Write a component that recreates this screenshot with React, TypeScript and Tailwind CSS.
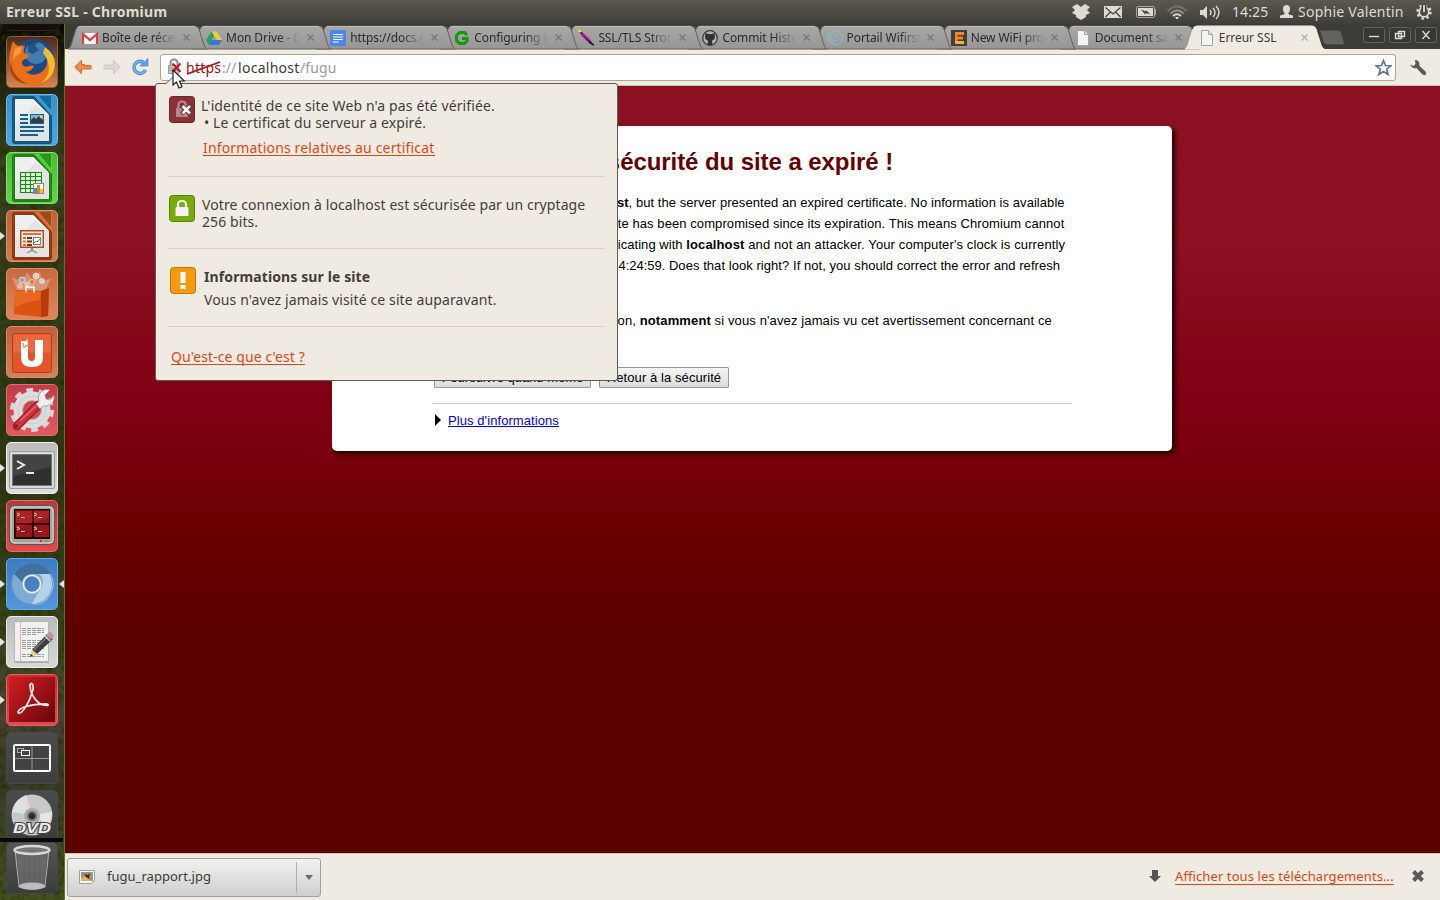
import React from "react";

const ubuntu = "font-['Noto_Sans','Open_Sans',sans-serif]";

/* ---------- Launcher icons ---------- */

function Doc({ dark, mid, children }: { dark: string; mid: string; children: React.ReactNode }) {
  return (
    <svg width="52" height="52" viewBox="0 0 52 52">
      <rect x="6" y="2" width="40" height="48" rx="3" fill={dark} />
      <path d="M28 2h18v20z" fill={mid} />
      <path d="M33 2h12v13q0 1-1 0z" fill={dark} opacity=".75" />
      <path d="M9 5h18l16 16v26H9z" fill="#e3e3e3" />
      <path d="M9 5h18l4 4L9 30z" fill="#f3f3f3" opacity=".7" />
      <path d="M27 5l16 16-2-1-15-13z" fill="#fff" />
      {children}
    </svg>
  );
}

function Firefox() {
  return (
    <svg width="52" height="52" viewBox="0 0 52 52">
      <circle cx="28" cy="23" r="20" fill="#1d4a80" />
      <circle cx="30" cy="17" r="11" fill="#4f8fc0" opacity=".75" />
      <path d="M22 7q5-3 10-1l-3 4 4 4-6 4-5-2z" fill="#113663" opacity=".6" />
      <path d="M7 5q2 4 5 5 4-1 7 0-2 4-1 7l5 2q0 3-4 4-4 2-3 5 2 4 7 2 3-1 5 0-2 5-8 6 6 5 14 1 9-5 7-16-1-6-4-8 9 4 11 13 2 12-6 19-9 8-20 5Q6 46 4 31 2 19 7 5z" fill="#e8701c" />
      <path d="M39 11q10 7 10 17-1 14-14 19 8-6 8-15-1-10-6-15z" fill="#f5bd2e" />
      <path d="M5 25q1 17 17 23-15-1-18-15z" fill="#b63d12" />
      <path d="M9 13q2-2 7-2-2 3-1 6-5 2-8 7 0-6 2-11z" fill="#f59a3e" />
    </svg>
  );
}

function Writer() {
  return (
    <Doc dark="#0f5787" mid="#3b9ad3">
      <g fill="#11628f">
        <path d="M14 20h8v2h-8zM14 24h8v2h-8zM14 28h8v2h-8zM14 32h24v2H14zM14 36h24v2H14zM14 40h18v2H14z" />
        <path d="M24 20h14v10H24z" />
      </g>
      <path d="M25 21h12v8H25z" fill="#77b9e2" />
      <path d="M25 29v-3l3-3 2 2 3-3 4 4v3z" fill="#353b3d" />
      <circle cx="35" cy="23" r="1.300" fill="#f4d354" />
    </Doc>
  );
}

function Calc() {
  return (
    <Doc dark="#218016" mid="#54cf3c">
      <path d="M14 20h22v21H14z" fill="#18890f" />
      <g fill="#dff0db">
        {[21, 25, 29, 33, 37].map((y) => (
          <path key={y} d={`M15 ${y}h4v3h-4zM20 ${y}h4v3h-4zM25 ${y}h4v3h-4zM30 ${y}h5v3h-5z`} />
        ))}
      </g>
      <path d="M27 31h11v11H27z" fill="#888" />
      <path d="M28 32h9v9h-9z" fill="#f5f5f5" />
      <path d="M28 36h3v5h-3z" fill="#3f95cf" />
      <path d="M31 33h3v8h-3z" fill="#ec8325" />
      <path d="M34 37h3v4h-3z" fill="#efc52e" />
    </Doc>
  );
}

function Impress() {
  return (
    <Doc dark="#8f3911" mid="#d3713d">
      <path d="M14 20h24v18H14z" fill="#b9491a" />
      <path d="M15.500 21.500h21v15h-21z" fill="#f5eeea" />
      <path d="M17 23h18v2H17zM17 27h3v2h-3zM17 30.500h3v2h-3zM17 34h3v2h-3z" fill="#d4763f" />
      <path d="M21 27h5v2h-5zM21 30.500h5v2h-5zM21 34h5v2h-5z" fill="#8c2f08" />
      <path d="M27 27h8v8h-8z" fill="#777" />
      <path d="M28 28h6v6h-6z" fill="#fff" />
      <path d="M28 33l2-2 1 1 3-3" stroke="#29a329" fill="none" />
      <path d="M25 38h2v2l5 3h-2l-4-2-4 2h-2l5-3z" fill="#888" />
    </Doc>
  );
}

function Bag() {
  return (
    <svg width="52" height="52" viewBox="0 0 52 52">
      <path d="M11 22L6 9l10 5 5-10 6 9 7-10 2 11 9-4-6 13z" fill="#fff" opacity=".25" />
      <g stroke="#f3e3da" strokeWidth=".8">
        <circle cx="16" cy="12" r="3" fill="#8badbd" />
        <circle cx="30" cy="8" r="3" fill="#e5cfc0" />
        <circle cx="26" cy="14" r="2.500" fill="#e7743c" />
        <circle cx="36" cy="13" r="2.500" fill="#c9d3d3" />
        <circle cx="14" cy="18" r="2" fill="#e9a884" />
        <circle cx="21" cy="16" r="2" fill="#e8b7a0" />
      </g>
      <path d="M9 22l26 1 8-3-1 28-7 1-27-3z" fill="#dc5311" />
      <path d="M35 23l8-3-1 28-7 1z" fill="#b83c0a" />
      <path d="M20 25v-6h8v6" stroke="#fff" strokeWidth="1.500" fill="none" />
      <path d="M9 23l26 1-1 8q-13 1-25 8z" fill="#f0762f" opacity=".6" />
    </svg>
  );
}

function UbuntuOne() {
  return (
    <svg width="52" height="52" viewBox="0 0 52 52">
      <rect x="6.500" y="7.500" width="39" height="39" rx="2" fill="#e4562a" stroke="#ad421e" />
      <rect x="7.500" y="8.500" width="37" height="18" fill="#f08158" opacity=".45" />
      <path d="M15 15q5 1 7-2v18q0 4 3.500 4t3.500-4V14h8v18q0 9-11 9t-11-9z" fill="#fff" />
      <path d="M22 15v6l-2-2-2 3-1-5" fill="none" stroke="#e08a6c" />
    </svg>
  );
}

function Settings() {
  return (
    <svg width="52" height="52" viewBox="0 0 52 52">
      <circle cx="26" cy="26" r="19" fill="none" stroke="#d6d6d6" strokeWidth="6" strokeDasharray="6.500 5.440" />
      <circle cx="26" cy="26" r="14" fill="none" stroke="#dcdcdc" strokeWidth="9" />
      <circle cx="26" cy="26" r="9.500" fill="none" stroke="#b5b5b5" />
      <circle cx="26" cy="26" r="14" fill="none" stroke="#cacaca" />
      <path d="M32 21L11 42" stroke="#8d1720" strokeWidth="8.500" strokeLinecap="round" />
      <path d="M32 21L11 42" stroke="#c9353b" strokeWidth="6.500" strokeLinecap="round" />
      <path d="M30 20l3-3q-2-6 3-10 4-3 8-1l-5 5 1 4 4 1 4-5q1 6-3 9-4 3-8 2l-3 3z" fill="#eee" stroke="#888" strokeWidth=".7" />
      <circle cx="10" cy="42" r="1.700" fill="#70131a" />
      <path d="M14 37l16-15" stroke="#e8686c" strokeWidth="1.500" />
    </svg>
  );
}

function Terminal() {
  return (
    <svg width="52" height="52" viewBox="0 0 52 52">
      <rect x="3" y="9" width="46" height="38" rx="2" fill="#999" />
      <rect x="4" y="10" width="44" height="36" rx="1.500" fill="#d9d9d9" />
      <rect x="6.500" y="12.500" width="39" height="31" fill="#30302f" stroke="#777" />
      <path d="M7 13h38v12L7 34z" fill="#565656" opacity=".5" />
      <path d="M11 19l7 4-7 4M20 31h8" stroke="#ececec" strokeWidth="2" fill="none" />
    </svg>
  );
}

function Terminator() {
  return (
    <svg width="52" height="52" viewBox="0 0 52 52">
      <rect x="3.500" y="5.500" width="45" height="39" rx="5" fill="#a5a5a0" stroke="#555" />
      <rect x="5" y="7" width="42" height="36" rx="4" fill="none" stroke="#d7d7d2" />
      <rect x="8" y="9" width="36" height="30" fill="#230605" />
      <path d="M10 11h16v12H10zM28 11h15v12H28zM10 25h16v12H10zM28 25h15v12H28z" fill="#98161a" />
      <path d="M9 10h34v7l-34 12z" fill="#e44" opacity=".25" />
      <path d="M11 13l3 1.500-3 1.500M15 17.500h4M28 13l3 1.500-3 1.500M32 17.500h4M11 27l3 1.500-3 1.500M15 31.500h4M28 27l3 1.500-3 1.500M32 31.500h4" stroke="#fbd9d9" fill="none" />
      <circle cx="35" cy="41" r="1.300" fill="#f22" />
      <path d="M38 41h5" stroke="#777" />
    </svg>
  );
}

function Chromium() {
  return (
    <svg width="52" height="52" viewBox="0 0 52 52">
      <circle cx="26" cy="26" r="21" fill="#7eaad8" />
      <path d="M8 16A21 21 0 0 1 45 16H26a10 10 0 0 0-10 8z" fill="#41709f" />
      <path d="M45 16A21 21 0 0 1 25 47l10-17a10 10 0 0 0-2-14z" fill="#b5d2ea" />
      <path d="M8 16A21 21 0 0 0 25 47l6-12a10 10 0 0 1-14-6z" fill="#7fabd7" />
      <circle cx="26" cy="26" r="9.500" fill="#e6f0f8" />
      <circle cx="26" cy="26" r="7.700" fill="#4a80c0" />
      <circle cx="26" cy="26" r="20.500" fill="none" stroke="#4a7db5" opacity=".7" />
    </svg>
  );
}

function Gedit() {
  return (
    <svg width="52" height="52" viewBox="0 0 52 52">
      <rect x="9" y="6" width="34" height="41" fill="#aaa" />
      <rect x="8.500" y="5.500" width="34" height="40" fill="#f0f0f0" stroke="#b5b5b5" />
      <path d="M14.500 6v39" stroke="#f1adad" />
      <g stroke="#9d9d9d" strokeWidth="1">
        {[12, 14, 16, 18, 24, 26, 28, 30, 32, 38, 40].map((y, i) => (
          <path key={y} d={i % 4 === 3 ? `M16 ${y}.5h14` : `M16 ${y}.5h22`} strokeDasharray="4 1" />
        ))}
      </g>
      <path d="M26 34l15-16 6 5-16 15z" fill="#3e3e3e" />
      <path d="M28 34l14-14" stroke="#777" strokeWidth="1.500" />
      <path d="M24 41l2-7 5 4z" fill="#e8d27b" />
      <path d="M24 41l1-3 2 2z" fill="#222" />
      <path d="M40 19l3-3q2 0 4 2 1 2 0 3l-2 3z" fill="#cf8bae" />
      <path d="M39 20l5 5" stroke="#ddd" strokeWidth="1.500" />
    </svg>
  );
}

function Adobe() {
  return (
    <svg width="52" height="52" viewBox="0 0 52 52">
      <defs>
        <linearGradient id="adobe" x1="0" y1="0" x2="1" y2="1">
          <stop offset="0" stopColor="#d31e22" />
          <stop offset="1" stopColor="#680609" />
        </linearGradient>
      </defs>
      <rect x="3" y="3" width="46" height="45" fill="url(#adobe)" />
      <path d="M12 38c1-4 11-8 28-8 6 1-1 3-7-1-6-5-9-12-9-18 1-4 5 0 2 8-3 10-10 21-13 20-1 0-1 0-1-1z" fill="none" stroke="#f5e4e4" strokeWidth="1.800" />
    </svg>
  );
}

function Workspaces() {
  return (
    <svg width="52" height="52" viewBox="0 0 52 52">
      <rect x="8" y="13" width="36" height="26" rx="1" fill="#424242" stroke="#fff" strokeWidth="2" />
      <path d="M26 14v24M9 26.500h34" stroke="#999" />
      <rect x="11.500" y="16.500" width="6" height="4" fill="none" stroke="#aaa" />
      <rect x="15.500" y="18.500" width="8" height="5" fill="#444" stroke="#fff" />
    </svg>
  );
}

function Dvd() {
  return (
    <svg width="52" height="52" viewBox="0 0 52 52">
      <circle cx="26" cy="25" r="20.500" fill="#c8c8c8" />
      <path d="M26 25L8 16q3-7 12-11z" fill="#e0e0e0" />
      <path d="M26 25L6 22l2-6z" fill="#d6e6e1" />
      <path d="M26 25L14 9l5-3z" fill="#e5d5df" />
      <path d="M26 25l20-3-3 14z" fill="#e6e6e6" />
      <circle cx="26" cy="26" r="8" fill="#aaa" />
      <circle cx="26" cy="26" r="5" fill="#707070" />
      <circle cx="26" cy="26" r="3" fill="#282828" />
      <text x="26" y="43" textAnchor="middle" textLength="38" lengthAdjust="spacingAndGlyphs" fontFamily="Liberation Sans" fontStyle="italic" fontWeight="bold" fontSize="14" fill="#eee" stroke="#444" strokeWidth="2" paintOrder="stroke">DVD</text>
    </svg>
  );
}

function Trash() {
  return (
    <svg width="52" height="52" viewBox="0 0 52 52">
      <path d="M9 8l4 37q13 5 26 0l4-37z" fill="#777" opacity=".6" />
      <path d="M9 8l4 37q13 5 26 0l4-37" fill="none" stroke="#aaa" />
      <g stroke="#9a9a9a" opacity=".15">
        <path d="M15 12l2 33M20 12l1 34M26 12v35M32 12l-1 34M37 12l-2 33M11 20h30M12 28h28M12 36h28" />
      </g>
      <ellipse cx="26" cy="44" rx="13" ry="3.500" fill="#bbb" />
      <ellipse cx="26" cy="8" rx="17.500" ry="4" fill="#777" stroke="#d8d8d8" strokeWidth="2.500" />
    </svg>
  );
}

const launcher = [
  { c: "from-[#4a2d1e] to-[#d68751] border-[#985a35]", I: Firefox },
  { c: "from-[#3c90c8] to-[#4ea5de] border-[#6fb9e6]", I: Writer },
  { c: "from-[#4cba36] to-[#5ed649] border-[#83e36f]", I: Calc },
  { c: "from-[#bb6238] to-[#d27b4f] border-[#dc9470]", I: Impress, run: true },
  { c: "from-[#c9683f] to-[#de875b] border-[#dd8c69]", I: Bag },
  { c: "from-[#c55e3b] to-[#d88057] border-[#dc8b68]", I: UbuntuOne },
  { c: "from-[#c43a46] to-[#df5a61] border-[#e16d74]", I: Settings },
  { c: "from-[#bcbcbc] to-[#dedede] border-[#f0f0f0]", I: Terminal, run: true },
  { c: "from-[#b8383d] to-[#df4b4f] border-[#e76a6c]", I: Terminator },
  { c: "from-[#3c7cc2] to-[#5497dc] border-[#6ca7e4]", I: Chromium, run: true, active: true },
  { c: "from-[#bcbcbc] to-[#d8d8d8] border-[#ececec]", I: Gedit, run: true },
  { c: "from-[#c72d34] to-[#e14a4f] border-[#e56266]", I: Adobe, run: true },
  { c: "from-[#4a4c4c] to-[#3d3d3f] border-[#4a4a4b]", I: Workspaces },
  { c: "from-[#4a4c4c] to-[#3a3b3b] border-[#4a4a4b]", I: Dvd },
];

function Tile({ c, children }: { c: string; children: React.ReactNode }) {
  return (
    <div className={`h-[52px] w-[52px] shrink-0 overflow-hidden rounded-[5px] border bg-linear-to-b ${c}`}>
      <div className="-m-px">{children}</div>
    </div>
  );
}

function Texture() {
  return (
    <svg className="absolute inset-0" width="65" height="876">
      <defs>
        <linearGradient id="grass" x1="0" y1="0" x2="0" y2="1">
          <stop offset="0" stopColor="#070806" />
          <stop offset=".05" stopColor="#191d10" />
          <stop offset=".15" stopColor="#3b4023" />
          <stop offset=".5" stopColor="#2c3716" />
          <stop offset=".7" stopColor="#38421d" />
          <stop offset=".78" stopColor="#4b4536" />
          <stop offset=".85" stopColor="#3a382d" />
          <stop offset="1" stopColor="#42511f" />
        </linearGradient>
        <filter id="noise" x="0" y="0" width="1" height="1">
          <feTurbulence type="fractalNoise" baseFrequency=".13" numOctaves="4" seed="4" />
          <feColorMatrix values="0 0 0 0 .02  0 0 0 0 .03  0 0 0 0 0  1.8 1.2 0 0 -1.3" />
        </filter>
      </defs>
      <rect width="65" height="876" fill="url(#grass)" />
      <rect width="65" height="876" filter="url(#noise)" />
      <path d="M64.500 0v876" stroke="#62722f" />
    </svg>
  );
}

function Launcher() {
  return (
    <aside className="relative flex w-[65px] shrink-0 flex-col overflow-hidden">
      <Texture />
      <div className="relative mx-[6px] h-[7px] w-[52px] rounded-b-[5px] border-b border-[#3a2012] bg-[#150d09]" />
      <div className="relative mt-[5px] flex flex-col gap-[6px]">
        {launcher.map(({ c, I, run, active }, i) => (
          <div key={i} className="flex items-center">
            <div className="w-[6px] shrink-0">
              {run && <svg width="5" height="8" viewBox="0 0 5 8"><path d="M0 0l5 4-5 4z" fill="#e4e4e4" /></svg>}
            </div>
            <Tile c={c}><I /></Tile>
            {active && <svg width="6" height="8" viewBox="0 0 6 8"><path d="M6 0L1 4l5 4z" fill="#e4e4e4" /></svg>}
          </div>
        ))}
      </div>
      <div className="relative ml-[6px]">
        <div className="absolute -left-[6px] -top-[4px] h-[4px] w-[63px] bg-[#090a08]" />
        <Tile c="from-[#555656] to-[#3a3b3c] border-[#454647]"><Trash /></Tile>
      </div>
    </aside>
  );
}

/* ---------- Top panel ---------- */

function TopPanel() {
  return (
    <header className="flex h-6 shrink-0 items-center bg-linear-to-b from-[#5c594e] to-[#3f3e3a] pl-[6px] text-[#dfdbd2]">
      <h1 className="text-[14px] font-bold leading-6 tracking-[0.26px]">Erreur SSL - Chromium</h1>
      <div className="ml-auto flex items-center pr-[8px] text-[14px] leading-6">
        <svg width="18" height="16" viewBox="0 0 18 16" fill="#dfdbd2">
          <path d="M5 0l4 3 4-3 5 3-3 3 3 3-4 2v2l-5 3-5-3v-2L0 9l3-3-3-3z" />
        </svg>
        <svg className="ml-[14px]" width="18" height="12" viewBox="0 0 18 12">
          <path d="M0 0h18v12H0z" fill="#dfdbd2" />
          <path d="M1.500 1.500L9 8l7.500-6.500M1.500 11L6.500 6M16.500 11l-5-5" stroke="#454440" strokeWidth="1.300" fill="none" />
        </svg>
        <svg className="ml-[14px]" width="20" height="12" viewBox="0 0 20 12">
          <rect x=".5" y=".5" width="18" height="11" rx="1.500" fill="none" stroke="#aaa69d" />
          <path d="M19 3h1v6h-1z" fill="#aaa69d" />
          <path d="M2 2h15v8H2z" fill="#dfdbd2" />
          <path d="M5 3.500l5 2V4l4.500 4.500-5-1.500V9z" fill="#454440" />
        </svg>
        <svg className="ml-[11px]" width="20" height="15" viewBox="0 0 20 15" fill="none" strokeWidth="1.800">
          <path d="M.5 6q9.500-9 19 0" stroke="#77746d" />
          <path d="M3.500 8.500q6.500-6 13 0" stroke="#928f87" />
          <path d="M6 11q4-3.500 8 0" stroke="#dfdbd2" />
          <path d="M8.500 12.500h3L10 14z" fill="#dfdbd2" stroke="#dfdbd2" strokeWidth="1" />
        </svg>
        <svg className="ml-[13px]" width="20" height="15" viewBox="0 0 20 15">
          <path d="M0 5h3l4-4v13l-4-4H0z" fill="#dfdbd2" />
          <path d="M10 5q2 2.500 0 5M13 3q4 4.500 0 9M16 1q6 6.500 0 13" fill="none" stroke="#dfdbd2" strokeWidth="1.400" />
        </svg>
        <span className="ml-[12px] w-[36px] whitespace-nowrap tracking-[0.1px]">14:25</span>
        <svg className="ml-[12px]" width="13" height="14" viewBox="0 0 13 14">
          <path d="M6.500 0Q10 0 10 4q0 3-2 4.500 1 1.500 5 2V13H0v-2.500q4-.5 5-2Q3 7 3 4q0-4 3.500-4z" fill="#dfdbd2" />
        </svg>
        <span className="ml-[5px] w-[106px] whitespace-nowrap tracking-[0.25px]">Sophie Valentin</span>
        <svg className="ml-[12px]" width="16" height="16" viewBox="0 0 16 16">
          <circle cx="8" cy="8" r="6.500" fill="none" stroke="#dfdbd2" strokeWidth="2.500" strokeDasharray="2.300 2.800" />
          <circle cx="8" cy="8" r="4.800" fill="none" stroke="#dfdbd2" strokeWidth="1.800" />
          <path d="M8 0v8" stroke="#444340" strokeWidth="5" />
          <path d="M8 1v7" stroke="#dfdbd2" strokeWidth="1.800" />
        </svg>
      </div>
    </header>
  );
}

/* ---------- Tabs ---------- */

const PageIcon = () => (
  <svg width="16" height="16" viewBox="0 0 16 16">
    <path d="M2.500.5h7l4 4v11h-11z" fill="#f4f4f4" stroke="#a4a4a4" />
    <path d="M9.500.5v4h4" fill="#ddd" stroke="#a4a4a4" />
  </svg>
);

const tabs = [
  { t: "Boîte de réception", icon: (
    <svg width="16" height="16" viewBox="0 0 16 16"><path d="M0 3h16v11H0z" fill="#f6f6f6" /><path d="M1 14V4l7 6 7-6v10" fill="none" stroke="#db3d38" strokeWidth="2.200" /></svg>) },
  { t: "Mon Drive - Comptes", icon: (
    <svg width="16" height="16" viewBox="0 0 16 16"><path d="M5.500 1.500h5L16 10h-5z" fill="#fbc92f" /><path d="M5.500 1.500L8 6l-5 9-3-5z" fill="#20a464" /><path d="M5.500 10H16l-3 5H3z" fill="#3777e3" /></svg>) },
  { t: "https://docs.google", icon: (
    <svg width="16" height="16" viewBox="0 0 16 16"><rect width="16" height="16" rx="1" fill="#4a86ee" /><path d="M3 4.500h10M3 7h10M3 9.500h10M3 12h6" stroke="#fff" strokeWidth="1.200" /></svg>) },
  { t: "Configuring HTTPS", icon: (
    <svg width="16" height="16" viewBox="0 0 16 16"><path d="M13 5L10.500 2.500h-5L2.500 5.500v5l3 3h5l2.500-2.500V8.500H8" fill="none" stroke="#0a9a0a" strokeWidth="3" /></svg>) },
  { t: "SSL/TLS Strong", icon: (
    <svg width="16" height="16" viewBox="0 0 16 16"><path d="M1 1l3 1 7 6 4 6-5-2-6-6z" fill="#e5122d" /><path d="M3 3l9 9" stroke="#3811a5" strokeWidth="2" /><path d="M4 4l8 6" stroke="#e431d1" /><path d="M0 0h3v2H1z" fill="#f9e52a" /><path d="M11 12l5 3" stroke="#111" strokeWidth="1.500" /></svg>) },
  { t: "Commit History", icon: (
    <svg width="16" height="16" viewBox="0 0 16 16"><circle cx="8" cy="8" r="7.300" fill="#b3b1ad" stroke="#3b3b3b" strokeWidth="1.300" /><path d="M3.500 3l2.500 1h4l2.500-1 .5 3q0 4-3 4.500l.5 4.500h-5l.500-4.500Q3 10 3 6z" fill="#333" /></svg>) },
  { t: "Portail Wifirst", icon: (
    <svg width="16" height="16" viewBox="0 0 16 16" fill="none" stroke="#8bb8cf" strokeWidth="1.200"><path d="M2 3Q-1 9 4 13q6 4 10-1 4-7-2-10-5-3-8 2-2 5 2 7 4 1 5-3 0-3-3-3-2 1-1 3" /></svg>) },
  { t: "New WiFi project", icon: (
    <svg width="16" height="16" viewBox="0 0 16 16"><path d="M0 0h16v16H0z" fill="#3f3f40" /><path d="M4 2h9v3H6.500v1.500H12v3H6.500V11H13v3H4z" fill="#f6871d" /><path d="M4 11h9v3H4z" fill="#fbb32a" /></svg>) },
  { t: "Document sans titre", icon: <PageIcon /> },
];

const tabPath = "M0 24Q2 23 3 20L8 4Q9 1 12 1H127Q130 1 131 4L136 20Q137 23 139 24z";

function TabBody({ t, icon, active }: { t: string; icon: React.ReactNode; active?: boolean }) {
  return (
    <>
      <svg className="absolute left-0 top-0" width="140" height="25" viewBox="0 0 140 25">
        <defs>
          <linearGradient id="tabg" x1="0" y1="0" x2="0" y2="1">
            <stop offset="0" stopColor="#a9a8a6" />
            <stop offset="1" stopColor="#989693" />
          </linearGradient>
        </defs>
        <path d={tabPath} fill={active ? "#f0ebe2" : "url(#tabg)"} stroke={active ? "#f0ebe2" : "#62605c"} strokeWidth="1" />
        {!active && <path d="M10 2.500Q11 1.500 12 1.500H127" stroke="#bab9b7" fill="none" />}
      </svg>
      <div className="relative flex h-[25px] items-center pl-[14px]">
        <div className="w-4 shrink-0">{icon}</div>
        <span
          className={`ml-[4px] w-[74px] overflow-hidden whitespace-nowrap text-[12px] leading-[24px] ${
            active ? "tracking-[-0.05px] text-[#3b3a36]" : "tracking-[-0.1px] text-[#2b2a27] mask-r-from-70% mask-r-to-100%"
          }`}
        >
          {t}
        </span>
        <svg className={active ? "ml-[8px]" : "ml-[6.500px]"} width="7" height="7" viewBox="0 0 7 7">
          <path d="M.5.5l6 6M6.500.5l-6 6" stroke={active ? "#b0aca4" : "#787673"} strokeWidth="1.300" />
        </svg>
      </div>
    </>
  );
}

function TabStrip() {
  return (
    <div className="flex h-[25px] shrink-0 items-start bg-[#3c3b37] pl-[3px] pt-px">
      {tabs.map((tab, i) => (
        <div key={i} className="relative h-6 w-[124.1px] shrink-0" style={{ zIndex: 10 - i }}>
          <TabBody {...tab} />
        </div>
      ))}
      <div className="relative z-20 h-6 w-[136px] shrink-0">
        <TabBody t="Erreur SSL" icon={<PageIcon />} active />
      </div>
      <svg className="-ml-[2px] mt-[5px]" width="26" height="16" viewBox="0 0 26 16">
        <path d="M1 .5h18q2 0 3 2l3.500 12H8q-2.500 0-3.500-2z" fill="#65635f" stroke="#4d4b48" />
      </svg>
      <div className="ml-auto flex gap-[4px] pr-[3px] pt-[2px]">
        {["M6 9.500h10", "M9.500 4.500h6v5h-6zM6.500 6.500h6v5h-6z", "M7.500 4l7 8M14.500 4l-7 8"].map((d) => (
          <svg key={d} width="22" height="16" viewBox="0 0 22 16">
            <rect x=".5" y=".5" width="21" height="15" rx="2" fill="#383733" stroke="#65635e" />
            <path d={d} fill="none" stroke="#dfdbd2" strokeWidth="1.400" />
          </svg>
        ))}
      </div>
    </div>
  );
}

/* ---------- Toolbar ---------- */

function Toolbar() {
  return (
    <div className="flex h-[37px] shrink-0 items-center border-b border-[#c9bfb3] bg-[#f0ebe2]">
      <svg className="ml-[9px]" width="18" height="16" viewBox="0 0 18 16">
        <path d="M.7 8L7.500 1.200V5.500h3l-1 1H17v3.500H7.500v4.800z" fill="#f0874c" stroke="#d6682c" strokeLinejoin="round" />
      </svg>
      <svg className="ml-[11px]" width="18" height="16" viewBox="0 0 18 16">
        <path d="M17.300 8L10.500 1.200V6H1v4h9.500v4.800z" fill="#dedad3" stroke="#cdc8c0" strokeLinejoin="round" />
      </svg>
      <svg className="ml-[10px]" width="18" height="18" viewBox="0 0 18 18">
        <path d="M12.500 4.500A6 6 0 1 0 14.500 12" fill="none" stroke="#4b8bce" strokeWidth="3.600" />
        <path d="M12.500 4.500A6 6 0 1 0 14.500 12" fill="none" stroke="#77b1ea" strokeWidth="1.800" />
        <path d="M9 8h8V.5z" fill="#5f9fe0" stroke="#4b8bce" strokeWidth=".7" />
      </svg>
      <div className="ml-[11px] flex h-[27px] w-[1236px] items-center rounded-[3px] border border-[#b5a488] bg-white pl-[7px] pr-[3px]">
        <svg width="16" height="18" viewBox="0 0 16 18">
          <path d="M2.500 8V5q0-3.500 3.500-3.500T9.500 5v2" fill="none" stroke="#8f8f8f" strokeWidth="2" />
          <path d="M.5 7.500h10v8H.5z" fill="#c9c9c9" stroke="#999" />
          <path d="M1 10h9M1 12.500h9" stroke="#999" />
          <path d="M4.500 5.500l8 8.500M12.500 5.500l-8 8.500" stroke="#d4111b" strokeWidth="2" />
        </svg>
        <div className="ml-[2px] flex whitespace-nowrap text-[14px] leading-[25px]">
          <span className="relative w-[36px] tracking-[0.25px] text-[#a50c12]">
            https
            <svg className="absolute left-0 top-[5px]" width="36" height="16" viewBox="0 0 36 16">
              <path d="M1 14L34 2" stroke="#b20d18" strokeWidth="1.800" />
            </svg>
          </span>
          <span className="w-[16px] text-[#999]">://</span>
          <span className="w-[62px] tracking-[0.28px] text-[#3c3b37]">localhost</span>
          <span className="tracking-[0.100px] text-[#999]">/fugu</span>
        </div>
        <svg className="ml-auto" width="17" height="17" viewBox="0 0 17 17">
          <path d="M8.500 1.500l2 5 5.300.3-4.100 3.400 1.400 5.200-4.600-2.900-4.600 2.900 1.400-5.200L1.200 6.800l5.300-.3z" fill="#fff" stroke="#66748f" strokeWidth="1.700" />
        </svg>
      </div>
      <svg className="ml-[14px]" width="17" height="17" viewBox="0 0 17 17">
        <path d="M5 1q4 0 4.500 4v2l6 5.500q1.500 2-.5 3.500-1.500.5-3-1l-5.500-6Q2 10 0 5.500l3.500 1.500 2-2z" fill="#595955" />
      </svg>
    </div>
  );
}

/* ---------- Interstitial ---------- */

function Interstitial() {
  return (
    <main className="flex-1 bg-[linear-gradient(#8b1021,#8c1122_20%,#7f0012_42%,#690000_59%,#5c0000_71%)] pl-[267px] pt-[40px] font-['Liberation_Sans',Arial,sans-serif] text-black">
      <div className="h-[325px] w-[840px] rounded-[5px] bg-white px-[100px] pt-[22px] shadow-[3px_3px_5px_#200]">
        <h1 className="whitespace-nowrap text-[24px] font-bold leading-7 tracking-[-0.07px] text-[#660000]">
          Le certificat de sécurité du site a expiré !
        </h1>
        <div className="mt-[16px] whitespace-nowrap text-[13px] leading-[21px]">
          <div>
            <p className="tracking-[0.06px]">
              You attempted to reach <b>localhost</b>, but the server presented an expired certificate. No information is available
            </p>
            <p className="tracking-[0.085px]">
              to indicate whether that certificate has been compromised since its expiration. This means Chromium cannot
            </p>
            <p className="tracking-[0.12px]">
              <span className="tracking-[0.05px]">guarantee that you are communicating with </span>
              <b>localhost</b> and not an attacker. Your computer's clock is currently
            </p>
            <p className="tracking-[0.055px]">
              <span className="tracking-[-0.02px]">set to mercredi 13 février 2013 14:24:59. </span>
              Does that look right? If not, you should correct the error and refresh
            </p>
            <p>this page.</p>
          </div>
          <div className="mt-[13px]">
            <p className="tracking-[0.12px]">
              Il faut éviter toute autre navigation, <b>notamment</b> si vous n'avez jamais vu cet avertissement concernant ce
            </p>
            <p>site.</p>
          </div>
        </div>
        <div className="mt-[15px] flex gap-2 pl-[2px] text-[13px]">
          <button className="h-[21px] w-[157px] whitespace-nowrap rounded-[1px] border border-[#999] bg-linear-to-b from-[#f4f4f4] to-[#dcdcdc] leading-[19px]">
            Poursuivre quand même
          </button>
          <button className="h-[21px] w-[130px] whitespace-nowrap rounded-[1px] border border-[#999] bg-linear-to-b from-[#f4f4f4] to-[#dcdcdc] leading-[19px] tracking-[0.08px]">
            Retour à la sécurité
          </button>
        </div>
        <div className="mt-[15px] flex items-center border-t border-[#ccc] pl-[3px] pt-[8px] text-[13px] leading-[18px]">
          <svg className="-mt-[3px]" width="6" height="12" viewBox="0 0 6 12"><path d="M0 0l6 6-6 6z" /></svg>
          <a className="ml-[7px] tracking-[0.08px] text-[#0000ee] underline">Plus d'informations</a>
        </div>
      </div>
    </main>
  );
}

/* ---------- Downloads ---------- */

function DownloadShelf() {
  return (
    <footer className="flex h-[47px] shrink-0 items-center border-t border-[#cdc2b6] bg-[#f0ebe2] pl-[2px]">
      <div className="flex h-[39px] w-[254px] items-center rounded-[3px] border border-[#a3a19d] bg-linear-to-b from-[#f2f2f1] to-[#cfcfce]">
        <svg className="ml-[11px]" width="16" height="14" viewBox="0 0 16 14">
          <path d="M.5.5h15v10l-3 3H.5z" fill="#fbfbfb" stroke="#a2a09c" />
          <path d="M2 2h12v9H2z" fill="#9d9687" />
          <path d="M2 8l5-2 4 3 2 2H2z" fill="#eeb14d" />
          <path d="M5 4l4 1 2-2-1 5 2 2-5-3z" fill="#34281a" />
        </svg>
        <span className="ml-[12px] whitespace-nowrap text-[13px] tracking-[0.03px] text-[#3c3b37]">fugu_rapport.jpg</span>
        <div className="ml-auto flex h-[31px] w-[24px] items-center justify-center border-l border-[#b0afad]">
          <svg width="8" height="5" viewBox="0 0 8 5"><path d="M0 0h8L4 5z" fill="#6d6c68" /></svg>
        </div>
      </div>
      <svg className="-mt-[2px] ml-auto" width="12" height="12" viewBox="0 0 12 12"><path d="M3 0h6v6h3l-6 6-6-6h3z" fill="#555" /></svg>
      <a className="ml-[14px] w-[219px] whitespace-nowrap border-b border-[#dd4814] text-[13px] leading-[15px] tracking-[0.1px] text-[#dd4814]">
        Afficher tous les téléchargements...
      </a>
      <svg className="-mt-[2px] ml-[18px] mr-[16px]" width="12" height="12" viewBox="0 0 12 12"><path d="M1.500 1.500l9 9M10.500 1.500l-9 9" stroke="#595955" strokeWidth="4" /></svg>
    </footer>
  );
}

/* ---------- Identity bubble ---------- */

function Bubble() {
  return (
    <section className="absolute left-[155px] top-[83px] z-30 h-[298px] w-[463px] rounded-[3px] border border-[#5d5b57] bg-[#f0ebe2] text-[14px] leading-[17px] text-[#3f3e3a]">
      <svg className="absolute left-[8px] -top-[7px]" width="26" height="9" viewBox="0 0 26 9">
        <path d="M0 9L2 6.500 9 0l7 6.500L18 9z" fill="#f0ebe2" />
        <path d="M0 6.500h2L9 0l7 6.500h2" fill="none" stroke="#5d5b57" />
      </svg>
      <div className="mx-[12px] flex h-[93px] border-b border-[#dcd3c5] pt-[13px]">
        <svg className="-mt-px ml-px shrink-0" width="26" height="27" viewBox="0 0 26 27">
          <rect x=".5" y=".5" width="25" height="26" rx="3" fill="#873236" stroke="#6c2527" />
          <path d="M9.500 12v-3q0-3.500 3.500-3.500T17 9v3" fill="none" stroke="#b98588" strokeWidth="2.200" />
          <path d="M7 12h12v9H7z" fill="#b98588" />
          <path d="M12.500 9.500l8.500 8.500M21 9.500l-8.500 8.500" stroke="#6b2427" strokeWidth="4" />
          <path d="M13.500 10l7.500 7.500M21 10l-7.500 7.500" stroke="#fff" strokeWidth="2.500" />
        </svg>
        <div className="whitespace-nowrap pl-[6px]">
          <p className="tracking-[0.13px]">L'identité de ce site Web n'a pas été vérifiée.</p>
          <p className="pl-[3px] tracking-[0.09px]">• Le certificat du serveur a expiré.</p>
          <a className="ml-[2px] mt-[9px] block w-[232px] border-b border-[#dd4814] leading-[15px] tracking-[0.16px] text-[#dd4814]">Informations relatives au certificat</a>
        </div>
      </div>
      <div className="mx-[12px] flex h-[72px] border-b border-[#dcd3c5] pt-[19px]">
        <svg className="-mt-px ml-px shrink-0" width="26" height="27" viewBox="0 0 26 27">
          <rect x=".5" y=".5" width="25" height="26" rx="3" fill="#78aa0a" stroke="#598006" />
          <path d="M9 13V9.500Q9 6 13 6t4 3.500V13" fill="none" stroke="#f3f3f3" strokeWidth="2.200" />
          <rect x="6.500" y="12" width="13" height="9" rx="1" fill="#f3f3f3" />
        </svg>
        <div className="whitespace-nowrap pl-[7px] tracking-[0.09px]">
          <p>Votre connexion à localhost est sécurisée par un cryptage</p>
          <p>256 bits.</p>
        </div>
      </div>
      <div className="mx-[12px] flex h-[78px] border-b border-[#dcd3c5] pl-px pt-[19px]">
        <svg className="-mt-px ml-px shrink-0" width="26" height="27" viewBox="0 0 26 27">
          <rect x=".5" y=".5" width="25" height="26" rx="3" fill="#f29b10" stroke="#c8740a" />
          <path d="M10.500 5h5v11h-5zM10.500 18h5v4h-5z" fill="#fff" />
        </svg>
        <div className="whitespace-nowrap pl-[8px] tracking-[0.11px]">
          <p className="font-bold">Informations sur le site</p>
          <p className="mt-[6px]">Vous n'avez jamais visité ce site auparavant.</p>
        </div>
      </div>
      <a className="ml-[15px] mt-[22px] block w-[134px] whitespace-nowrap border-b border-[#dd4814] leading-[15px] tracking-[0.1px] text-[#dd4814]">Qu'est-ce que c'est ?</a>
    </section>
  );
}

export default function App() {
  return (
    <div className={`relative flex h-[900px] w-[1440px] flex-col overflow-hidden ${ubuntu}`}>
      <TopPanel />
      <div className="flex min-h-0 flex-1">
        <Launcher />
        <div className="flex min-w-0 flex-1 flex-col">
          <TabStrip />
          <Toolbar />
          <Interstitial />
          <DownloadShelf />
        </div>
      </div>
      <Bubble />
      <svg className="absolute left-[172px] top-[69px] z-40" width="14" height="20" viewBox="0 0 14 20">
        <path d="M1 1v15l3.500-3 2.500 6 3-1.300-2.500-5.700h4.800z" fill="#fff" stroke="#222" strokeWidth="1.200" />
      </svg>
    </div>
  );
}
